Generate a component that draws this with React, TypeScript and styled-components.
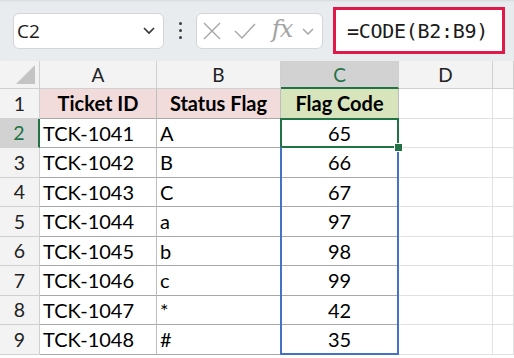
import React from 'react';
import styled, { css, createGlobalStyle } from 'styled-components';

const GlobalStyle = createGlobalStyle`
  body {
    margin: 0;
    background: #ffffff;
  }
`;

const Sheet = styled.div`
  width: 514px;
  height: 358px;
  overflow: hidden;
  background: #ffffff;
  font-family: Lato, "Open Sans", sans-serif;
`;

const Toolbar = styled.div`
  height: 61px;
  display: flex;
  align-items: center;
  padding-left: 13px;
  background: #e9ecef;
  box-shadow: inset 0 2px 2px -1px #d6d9dc;
`;

const InputBox = styled.div<{ $width: number }>`
  width: ${p => p.$width}px;
  height: 36px;
  box-sizing: border-box;
  background: #ffffff;
  border: 1px solid #d3d6d9;
  border-radius: 6px;
  display: flex;
  align-items: center;
`;

const NameText = styled.span`
  flex: 1;
  padding-left: 3px;
  font-family: "Open Sans", sans-serif;
  font-size: 19px;
  color: #1b1b1b;
`;

const Dots = styled.div`
  width: 32px;
  display: flex;
  flex-direction: column;
  align-items: center;
  gap: 4px;
  span {
    width: 3px;
    height: 3px;
    border-radius: 50%;
    background: #3a3f45;
  }
`;

const FxItem = styled.div<{ $width: number }>`
  width: ${p => p.$width}px;
  display: flex;
  justify-content: center;
  align-items: center;
`;

const FxLabel = styled.span`
  font-family: "DejaVu Serif", "Liberation Serif", serif;
  font-style: italic;
  font-size: 24px;
  color: #a3a3a3;
  letter-spacing: -1px;
  margin-top: -4px;
`;

const FormulaBox = styled.div`
  margin-left: 10px;
  width: 172px;
  height: 47px;
  box-sizing: border-box;
  border: 3px solid #e0194a;
  background: #ffffff;
  display: flex;
  align-items: center;
  padding-left: 11px;
  font-family: "DejaVu Sans Mono", monospace;
  font-size: 20px;
  letter-spacing: -0.3px;
  color: #1b1b1b;
`;

const Grid = styled.div`
  display: grid;
  grid-template-columns: 40px 117px 124px 118px 94px 1fr;
  grid-template-rows: 28px repeat(9, 29.5px);
`;

const Corner = styled.div`
  position: relative;
  background: #f3f3f3;
  border-right: 1px solid #d0d0d0;
  border-bottom: 1px solid #d0d0d0;
  &::after {
    content: '';
    position: absolute;
    right: 4px;
    bottom: 4px;
    border-style: solid;
    border-width: 0 0 19px 19px;
    border-color: transparent transparent #c4c4c4 transparent;
  }
`;

const ColHeader = styled.div<{ $active?: boolean }>`
  background: ${p => (p.$active ? '#d2d2d2' : '#f3f3f3')};
  color: ${p => (p.$active ? '#217346' : '#222222')};
  border-right: 1px solid #d0d0d0;
  border-bottom: ${p => (p.$active ? '2px solid #217346' : '1px solid #d0d0d0')};
  display: flex;
  align-items: center;
  justify-content: center;
  font-size: 19px;
`;

const RowHeader = styled.div<{ $active?: boolean }>`
  background: ${p => (p.$active ? '#d2d2d2' : '#f3f3f3')};
  color: ${p => (p.$active ? '#217346' : '#222222')};
  border-right: ${p => (p.$active ? '2px solid #217346' : '1px solid #d0d0d0')};
  border-bottom: 1px solid #d0d0d0;
  display: flex;
  align-items: center;
  justify-content: center;
  font-size: 19.5px;
`;

type Range = 'top' | 'mid' | 'bottom';

const Cell = styled.div<{
  $bg?: string;
  $bold?: boolean;
  $center?: boolean;
  $plain?: boolean;
  $range?: Range;
  $active?: boolean;
}>`
  position: relative;
  background: ${p => p.$bg || '#ffffff'};
  font-weight: ${p => (p.$bold ? 700 : 400)};
  justify-content: ${p => (p.$center ? 'center' : 'flex-start')};
  border-right: 1px solid ${p => (p.$plain ? '#e1e1e1' : '#bdbdbd')};
  border-bottom: 1px solid ${p => (p.$plain ? '#e1e1e1' : '#a8a8a8')};
  display: flex;
  align-items: center;
  padding-left: ${p => (p.$center ? 0 : 3)}px;
  font-size: 20px;
  color: #000000;
  white-space: nowrap;

  ${p =>
    p.$range &&
    css`
      &::before {
        content: '';
        position: absolute;
        top: -1px;
        left: -1px;
        right: -1px;
        bottom: -1px;
        border-left: 2px solid #4472c4;
        border-right: 2px solid #4472c4;
        border-bottom: ${p.$range === 'bottom' ? '2px solid #4472c4' : 'none'};
        pointer-events: none;
      }
    `}

  ${p =>
    p.$active &&
    css`
      &::before {
        border: 2px solid #217346;
      }
      &::after {
        content: '';
        position: absolute;
        right: -5px;
        bottom: -5px;
        width: 7px;
        height: 7px;
        background: #217346;
        border: 1px solid #ffffff;
        z-index: 2;
      }
    `}
`;

const rows = [
  ['TCK-1041', 'A', '65'],
  ['TCK-1042', 'B', '66'],
  ['TCK-1043', 'C', '67'],
  ['TCK-1044', 'a', '97'],
  ['TCK-1045', 'b', '98'],
  ['TCK-1046', 'c', '99'],
  ['TCK-1047', '*', '42'],
  ['TCK-1048', '#', '35'],
];

const IconStroke = '#a6a6a6';

function App() {
  return (
    <>
      <GlobalStyle />
      <Sheet>
        <Toolbar>
          <InputBox $width={151}>
            <NameText>C2</NameText>
            <svg width="28" height="20" viewBox="0 0 28 20">
              <path d="M9 7 L14 12 L19 7" fill="none" stroke="#333" strokeWidth="1.6" />
            </svg>
          </InputBox>
          <Dots>
            <span />
            <span />
            <span />
          </Dots>
          <InputBox $width={127}>
            <FxItem $width={30}>
              <svg width="20" height="20" viewBox="0 0 20 20">
                <path d="M2 2 L18 18 M18 2 L2 18" stroke={IconStroke} strokeWidth="1.4" />
              </svg>
            </FxItem>
            <FxItem $width={36}>
              <svg width="24" height="20" viewBox="0 0 24 20">
                <path d="M2 10 L9 17 L22 3" fill="none" stroke={IconStroke} strokeWidth="1.4" />
              </svg>
            </FxItem>
            <FxItem $width={38}>
              <FxLabel>fx</FxLabel>
            </FxItem>
            <svg width="16" height="20" viewBox="0 0 16 20">
              <path d="M2 8 L7 13 L12 8" fill="none" stroke={IconStroke} strokeWidth="1.5" />
            </svg>
          </InputBox>
          <FormulaBox>=CODE(B2:B9)</FormulaBox>
        </Toolbar>
        <Grid>
          <Corner />
          <ColHeader>A</ColHeader>
          <ColHeader>B</ColHeader>
          <ColHeader $active>C</ColHeader>
          <ColHeader>D</ColHeader>
          <ColHeader />

          <RowHeader>1</RowHeader>
          <Cell $bg="#f2dcdb" $bold $center>Ticket ID</Cell>
          <Cell $bg="#f2dcdb" $bold $center>Status Flag</Cell>
          <Cell $bg="#d8e4bc" $bold $center>Flag Code</Cell>
          <Cell $plain />
          <Cell $plain />

          {rows.map((r, i) => (
            <React.Fragment key={r[0]}>
              <RowHeader $active={i === 0}>{i + 2}</RowHeader>
              <Cell>{r[0]}</Cell>
              <Cell>{r[1]}</Cell>
              <Cell
                $center
                $active={i === 0}
                $range={i === 0 ? 'top' : i === rows.length - 1 ? 'bottom' : 'mid'}
              >
                {r[2]}
              </Cell>
              <Cell $plain />
              <Cell $plain />
            </React.Fragment>
          ))}
        </Grid>
      </Sheet>
    </>
  );
}

export default App;
